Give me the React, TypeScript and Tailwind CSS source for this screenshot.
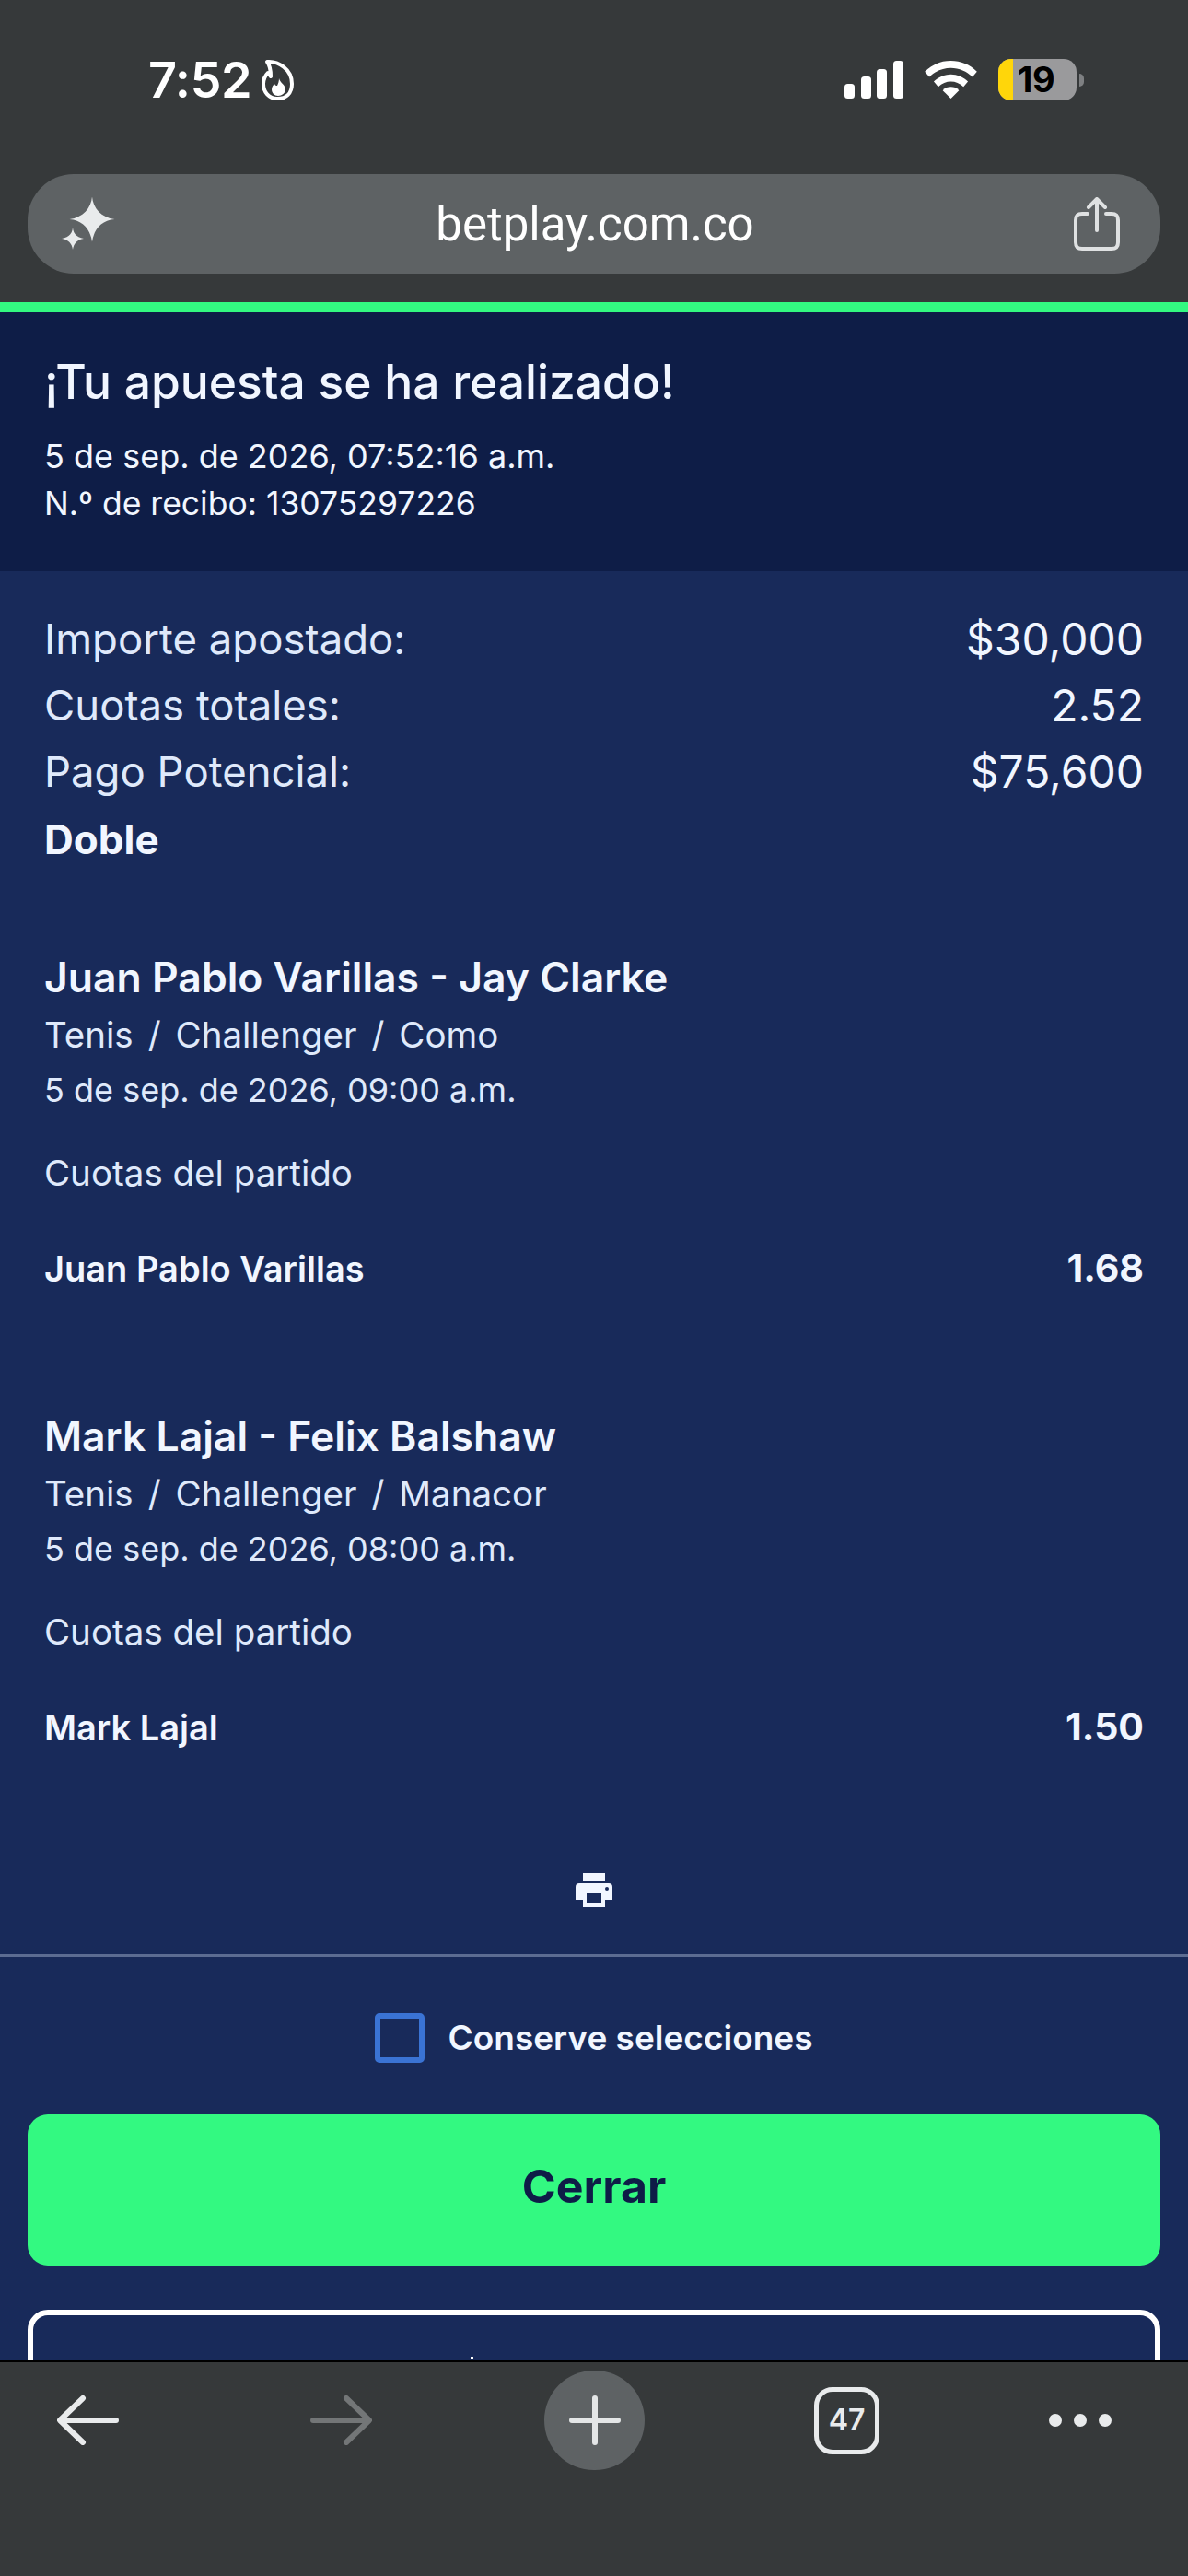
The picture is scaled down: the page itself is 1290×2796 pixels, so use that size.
const font = { fontFamily: '"Inter","Noto Sans",sans-serif' };

function Selection({ match, league, date, pick, odds }: { match: string; league: string[]; date: string; pick: string; odds: string }) {
  return (
    <section className="flex shrink-0 flex-col">
      <h3 className="h-[60px] text-[44.5px] leading-[60px] font-semibold text-[#f1f6ff]">{match}</h3>
      <p className="mt-[2px] flex h-[60px] items-center gap-[16px] text-[38.5px] leading-[60px] text-[#dfe9fb]">
        {league.map((l, i) => (
          <span key={l} className="flex items-center gap-[16px]">
            {i > 0 && <span>/</span>}
            <span>{l}</span>
          </span>
        ))}
      </p>
      <p className="h-[60px] text-[36px] leading-[60px] text-[#dfe9fb]">{date}</p>
      <p className="mt-[30px] h-[60px] text-[38.5px] leading-[60px] text-[#dfe9fb]">Cuotas del partido</p>
      <div className="mt-[44px] flex h-[60px] items-center justify-between">
        <span className="text-[38px] font-semibold text-[#f1f6ff]">{pick}</span>
        <span className="text-[41px] font-bold text-[#f1f6ff]">{odds}</span>
      </div>
    </section>
  );
}

function SummaryRow({ label, value }: { label: string; value: string }) {
  return (
    <div className="flex h-[72px] items-center justify-between">
      <span className="text-[45.5px] text-[#dfe9fb]">{label}</span>
      <span className="text-[48px] text-[#f1f6ff]">{value}</span>
    </div>
  );
}

export default function App() {
  return (
    <div style={font} className="flex h-[2796px] w-[1290px] flex-col overflow-hidden bg-[#182a5a] text-white">
      <header className="h-[328px] shrink-0 bg-[#36393a]">
        <div className="flex h-[189px] items-start justify-between pt-[57px] pr-[113px] pl-[161px]">
          <div className="flex items-center gap-[11px]">
            <span className="text-[54px] leading-[60px] font-semibold tracking-[-0.5px]">7:52</span>
            <svg width="36" height="46" viewBox="0 0 36 46" fill="none" stroke="white" strokeWidth="4" strokeLinejoin="round">
              <path d="M6 3C18 2 33 11 33 27 33 37 27 43 17 43 8 43 2 36 2 27 2 22 4 18 7 15L10 19C10 12 9 7 6 3Z" />
              <path fill="white" stroke="none" d="M19 21C20 26 26 28 26 33 26 37 22 40 18 40 14 40 11 37 11 33 11 30 13 28 14 27 15 29 16 29 17 29 18 27 19 24 19 21Z" />
            </svg>
          </div>
          <div className="flex items-center gap-[23px] pt-[7px]">
            <svg width="64" height="41" viewBox="0 0 64 41" fill="white">
              <rect x="0" y="25" width="11" height="16" rx="3.5" />
              <rect x="18" y="17" width="11" height="24" rx="3.5" />
              <rect x="35" y="9" width="11" height="32" rx="3.5" />
              <rect x="53" y="0" width="11" height="41" rx="3.5" />
            </svg>
            <svg width="57" height="41" viewBox="0 0 58 42" fill="white">
              <path d="M29 0C18 0 8 4 0 12l5 6c6-6 15-10 24-10s18 4 24 10l5-6C50 4 40 0 29 0z" />
              <path d="M29 15c-7 0-14 3-19 8l5 6c4-4 9-6 14-6s10 2 14 6l5-6c-5-5-12-8-19-8z" />
              <path d="M29 29c-3 0-7 1-9 4l9 9 9-9c-2-3-6-4-9-4z" />
            </svg>
            <div className="flex items-center gap-[3px]">
              <div className="flex h-[45px] w-[85px] items-center rounded-[14px] bg-[#9a9a9c]">
                <div className="h-full w-[16px] shrink-0 rounded-l-[14px] bg-[#ffd60a]" />
                <span className="ml-[5px] text-[38px] leading-[45px] font-bold tracking-[-0.5px] text-black">19</span>
              </div>
              <div className="h-[14px] w-[5px] rounded-r-full bg-[#7e8082]" />
            </div>
          </div>
        </div>
        <div className="mx-[30px] flex h-[108px] items-center justify-between rounded-[50px] bg-[#5e6264] pr-[44px] pl-[36px]">
          <svg width="60" height="60" viewBox="0 0 60 60" fill="#e9ebec">
            <path d="M34 .5C35 13 44 23 58.5 25 44 26 36 36 34 49.5 32 36 24 26 9.5 25 24 23 33 13 34 .5Z" />
            <path d="M13 34C13.5 41 18 45 25 46 18 47 14 51 13 58 12 51 8 47 1 46 8 45 12.5 41 13 34Z" />
          </svg>
          <span style={{ fontFamily: '"Roboto",sans-serif' }} className="text-[51px] leading-none text-white">betplay.com.co</span>
          <svg width="50" height="58" viewBox="0 0 50 58" fill="none" stroke="#dfe1e2" strokeWidth="4" strokeLinecap="round" strokeLinejoin="round">
            <path d="M15 18H9c-5 0-7 2-7 7v24c0 5 2 7 7 7h32c5 0 7-2 7-7V25c0-5-2-7-7-7h-6" />
            <path d="M25 36V3M16 11l9-9 9 9" />
          </svg>
        </div>
      </header>

      <div className="h-[11px] shrink-0 bg-[#33f981]" />

      <section className="h-[281px] shrink-0 bg-[#0e1d47] px-[48px] pt-[40px]">
        <h1 className="text-[51.5px] leading-[70px] font-medium text-[#f1f6ff]">¡Tu apuesta se ha realizado!</h1>
        <p className="mt-[20px] text-[36px] leading-[52px] text-[#f1f6ff]">5 de sep. de 2026, 07:52:16 a.m.</p>
        <p className="text-[35.5px] leading-[51px] text-[#f1f6ff]">N.º de recibo: 13075297226</p>
      </section>

      <main className="flex min-h-0 flex-1 flex-col overflow-hidden">
        <div className="shrink-0 px-[48px] pt-[38px]">
          <SummaryRow label="Importe apostado:" value="$30,000" />
          <SummaryRow label="Cuotas totales:" value="2.52" />
          <SummaryRow label="Pago Potencial:" value="$75,600" />
          <div className="flex h-[73px] items-center text-[44px] font-bold text-[#f1f6ff]">Doble</div>
        </div>
        <div className="mt-[84px] flex shrink-0 flex-col gap-[122px] px-[48px]">
          <Selection match="Juan Pablo Varillas - Jay Clarke" league={["Tenis", "Challenger", "Como"]} date="5 de sep. de 2026, 09:00 a.m." pick="Juan Pablo Varillas" odds="1.68" />
          <Selection match="Mark Lajal - Felix Balshaw" league={["Tenis", "Challenger", "Manacor"]} date="5 de sep. de 2026, 08:00 a.m." pick="Mark Lajal" odds="1.50" />
        </div>
        <div className="mt-[128px] flex shrink-0 justify-center">
          <svg width="40" height="37" viewBox="0 0 40 37" fill="#f1f6ff">
            <rect x="8" y="0" width="24" height="9" />
            <path fillRule="evenodd" d="M4 11h32a4 4 0 0 1 4 4v14h-8v8H8v-8H0V15a4 4 0 0 1 4-4zM12 22v11h16V22z" />
            <circle cx="34" cy="17" r="2" fill="#182a5a" />
          </svg>
        </div>
        <div className="mt-[51px] h-[3px] shrink-0 bg-[#5c6c92]" />
        <div className="mt-[60px] flex shrink-0 items-center justify-center gap-[25px]">
          <div className="h-[54px] w-[54px] rounded-[5px] border-[6px] border-[#3a73d4]" />
          <span className="text-[37px] font-semibold text-[#f1f6ff]">Conserve selecciones</span>
        </div>
        <button className="mx-[30px] mt-[55px] h-[164px] shrink-0 rounded-[22px] bg-[#33f981] pb-[6px] text-[50px] font-bold text-[#0e1d47]">Cerrar</button>
        <div className="relative mx-[30px] mt-[48px] h-[165px] shrink-0 rounded-[22px] border-[6px] border-white">
          <span className="absolute top-[45px] left-[475px] h-[3px] w-[3px] bg-white" />
        </div>
      </main>

      <footer className="h-[234px] shrink-0 border-t-[2px] border-black bg-[#36393a]">
        <div className="flex h-[126px] items-center pl-[62px]">
          <svg width="67" height="54" viewBox="0 0 67 54" fill="none" stroke="#e9ebec" strokeWidth="6" strokeLinecap="round" strokeLinejoin="round">
            <path d="M64 27H5M28 3 3 27l25 24" />
          </svg>
          <svg className="ml-[208px]" width="67" height="54" viewBox="0 0 67 54" fill="none" stroke="#737677" strokeWidth="6" strokeLinecap="round" strokeLinejoin="round">
            <path d="M3 27h59M39 3l25 24-25 24" />
          </svg>
          <div className="ml-[187px] flex h-[108px] w-[109px] items-center justify-center rounded-full bg-[#5e6264]">
            <svg width="56" height="54" viewBox="0 0 56 54" stroke="#e4e6e7" strokeWidth="6" strokeLinecap="round">
              <path d="M28 3v48M3 27h50" />
            </svg>
          </div>
          <div className="ml-[184px] flex h-[73px] w-[71px] items-center justify-center rounded-[20px] border-[5px] border-[#e9ebec] text-[32px] font-semibold text-[#e9ebec]">47</div>
          <div className="ml-[184px] flex gap-[13px]">
            <span className="h-[14px] w-[14px] rounded-full bg-[#e9ebec]" />
            <span className="h-[14px] w-[14px] rounded-full bg-[#e9ebec]" />
            <span className="h-[14px] w-[14px] rounded-full bg-[#e9ebec]" />
          </div>
        </div>
      </footer>
    </div>
  );
}
